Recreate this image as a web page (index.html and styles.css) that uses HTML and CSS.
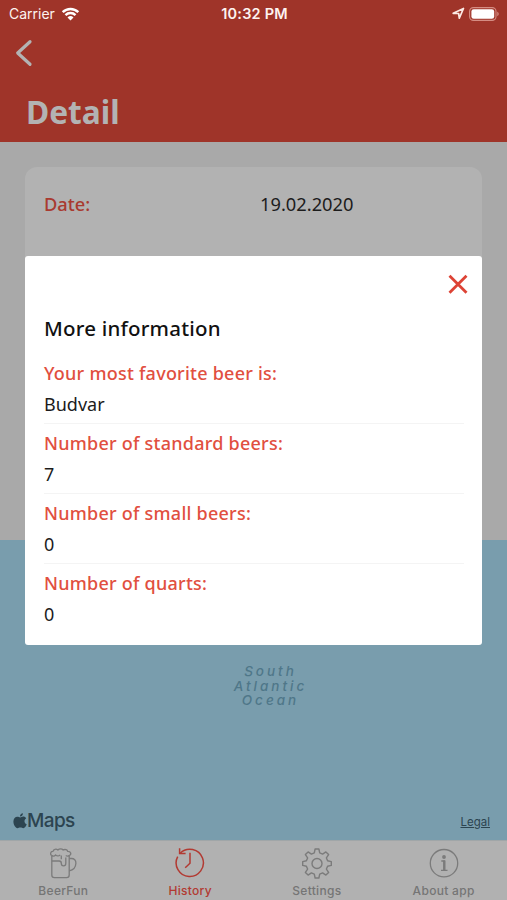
FILE: index.html
```html
<!DOCTYPE html>
<html lang="en">
<head>
  <meta charset="UTF-8">
  <meta name="viewport" content="width=device-width, initial-scale=1.0">
  <title>BeerFun - Detail</title>
  <link rel="stylesheet" href="styles.css">
</head>
<body>
  <div class="screen">
    <header class="header">
      <div class="status-bar">
        <div class="status-left">
          <span class="carrier">Carrier</span>
          <svg class="wifi" width="19" height="14" viewBox="0 0 18 14">
            <path d="M1.2 5.100a11.200 11.200 0 0 1 15.600 0M4 8.100a7.200 7.200 0 0 1 10 0" fill="none" stroke="#fff" stroke-width="2.500"/>
            <path d="M9 13.600L6 10.400a4.400 4.400 0 0 1 6 0z" fill="#fff"/>
          </svg>
        </div>
        <span class="time">10:32 PM</span>
        <div class="status-right">
          <svg width="13" height="13" viewBox="0 0 13 13">
            <path d="M1.200 6.300L11.500 1.500 7.300 11.200 6.600 6.500z" fill="none" stroke="#fbe9e4" stroke-width="1.700" stroke-linejoin="round"/>
          </svg>
          <svg width="31" height="14" viewBox="0 0 31 14">
            <rect x=".6" y=".6" width="26.400" height="12.800" rx="3.800" fill="none" stroke="#d58d83" stroke-width="1.100"/>
            <rect x="2.400" y="2.300" width="22.800" height="9.400" rx="2.300" fill="#fff"/>
            <path d="M28.300 4.800v4.400c1.900-.7 1.900-3.700 0-4.400z" fill="#d58d83"/>
          </svg>
        </div>
      </div>
      <svg class="back" width="18" height="28" viewBox="0 0 18 28">
        <path d="M15 2.700L2.700 14 15 25.300" fill="none" stroke="#b3b3b3" stroke-width="3.200" stroke-linecap="round" stroke-linejoin="round"/>
      </svg>
      <h1 class="title">Detail</h1>
    </header>

    <main class="content">
      <div class="card">
        <span class="card-label">Date:</span>
        <span class="card-value">19.02.2020</span>
      </div>
    </main>

    <section class="map">
      <p class="ocean">South<br>Atlantic<br>Ocean</p>
      <div class="map-footer">
        <div class="maps-logo">
          <svg width="14" height="16" viewBox="0 0 14 16" fill="#2c4450">
            <path d="M7.100 4.400C8 4.400 8.900 3.600 10.200 3.600c1.200 0 2.300.6 3 1.600-2.500 1.500-2.100 5 .5 6.100-.7 2-2 3.900-3.400 3.900-1.100 0-1.500-.7-2.900-.7s-1.800.7-2.900.7C2.500 15.200.4 11.800.4 8.600c0-3.100 1.900-4.900 3.900-4.900 1.200 0 2.100.7 2.800.7z"/>
            <path d="M9.900.2c.2 1.700-1.200 3.300-2.900 3.200C6.900 1.800 8.300.3 9.900.2z"/>
          </svg>
          <span class="maps-text">Maps</span>
        </div>
        <span class="legal">Legal</span>
      </div>
    </section>

    <nav class="tabs">
      <div class="tab">
        <svg width="30" height="32" viewBox="0 0 30 32" fill="none" stroke="#7b7b7b" stroke-width="1.300" stroke-linejoin="round">
          <path d="M3.800 8.600V28c0 1.600 1 2.600 2.600 2.600h12.200c1.600 0 2.600-1 2.600-2.600V8.600"/>
          <path d="M3.800 8.600C1.900 7.800 2.200 4.300 5 4.300c.6-2.200 3.200-2.800 4.900-1.300 1.400-1.600 4-1.600 5.300 0 1.800-1.100 4.200-.3 4.500 1.300 3.200-.1 4.200 3.200 1.500 4.300"/>
          <path d="M3.800 8.600c1.700 1 3.200.2 3.800-.7 1.300 1.400 3.300 1.400 4.600 0M17.800 8.400c1 .8 2.300.8 3.400.2"/>
          <path d="M3.800 14h7.400c1.700 0 2.100.7 2.100 2.200 0 3.500 4.500 3.500 4.500 0V10.500M13.300 8.500v3.800"/>
          <path d="M21.200 11.500h2.300c2.700 0 4.500 1.800 4.400 4.800-.2 4-2.800 6.900-6.700 7.500"/>
        </svg>
        <span class="tab-name">BeerFun</span>
      </div>
      <div class="tab active">
        <svg width="30" height="32" viewBox="0 0 30 32" fill="none" stroke="#b23a32" stroke-width="1.500">
          <path d="M5.200 6.200A13.600 13.600 0 1 1 2.700 9.600"/>
          <path d="M4.600 1.200v5.400h6M15 5.800v10.400l-4.800 4.600"/>
        </svg>
        <span class="tab-name">History</span>
      </div>
      <div class="tab">
        <svg width="30" height="32" viewBox="0 0 30 32" fill="none" stroke="#7b7b7b" stroke-width="1.400" stroke-linejoin="round">
          <path d="M13.100 2h3.800l.8 3.900 2.900 1.200 3.300-2.200 2.700 2.700-2.200 3.300 1.200 2.900 3.700.8v3.800l-3.700.8-1.200 2.900 2.200 3.300-2.700 2.700-3.300-2.200-2.900 1.200-.8 3.900h-3.800l-.8-3.900-2.900-1.200-3.300 2.200-2.700-2.700 2.200-3.300-1.200-2.900-3.700-.8v-3.800l3.700-.8 1.200-2.900-2.200-3.300 2.700-2.700 3.300 2.200 2.900-1.200z"/>
          <circle cx="15" cy="16.500" r="5"/>
        </svg>
        <span class="tab-name">Settings</span>
      </div>
      <div class="tab">
        <svg width="30" height="32" viewBox="0 0 30 32" fill="none" stroke="#7b7b7b">
          <circle cx="15" cy="16.200" r="13.700" stroke-width="1.300"/>
          <circle cx="15" cy="10" r="1.900" fill="#7b7b7b" stroke="none"/>
          <path d="M12.300 14h3v9M12 23.300h6.500" stroke-width="1.300"/>
          <path d="M15.300 13.500v10" stroke-width="2.400"/>
        </svg>
        <span class="tab-name">About app</span>
      </div>
    </nav>

    <!-- More information dialog -->
    <div class="modal">
      <div class="modal-top">
        <svg class="close" width="20" height="20" viewBox="0 0 20 20">
          <path d="M1.500 1.800l17 17M18.500 1.800L1.500 18.800" stroke="#dd4335" stroke-width="2.800"/>
        </svg>
      </div>
      <h2 class="modal-title">More information</h2>
      <div class="row">
        <div class="label">Your most favorite beer is:</div>
        <div class="value">Budvar</div>
      </div>
      <div class="row">
        <div class="label">Number of standard beers:</div>
        <div class="value">7</div>
      </div>
      <div class="row">
        <div class="label">Number of small beers:</div>
        <div class="value">0</div>
      </div>
      <div class="row">
        <div class="label">Number of quarts:</div>
        <div class="value">0</div>
      </div>
    </div>
  </div>
</body>
</html>
```

FILE: styles.css
```css
* {
  box-sizing: border-box;
}
body {
  margin: 0;
  font-family: "Noto Sans", sans-serif;
}
.screen {
  position: relative;
  display: flex;
  flex-direction: column;
  width: 507px;
  height: 900px;
  overflow: hidden;
  background-color: #a9a9a9;
}
.header {
  display: flex;
  flex-direction: column;
  height: 142px;
  background-color: #9f3429;
}
.status-bar {
  display: flex;
  align-items: center;
  height: 27px;
  padding: 0 7px 0 9px;
  font-family: Inter, sans-serif;
  font-size: 14px;
  color: #fdf3f0;
}
.status-left, .status-right {
  display: flex;
  flex: 1;
  align-items: center;
  gap: 6px;
}
.status-right {
  justify-content: flex-end;
  gap: 4px;
}
.time {
  font-size: 14.5px;
  font-weight: 600;
  letter-spacing: 0.2px;
}
.back {
  margin: 12px 0 0 15px;
}
.title {
  margin: 22px 0 0 26px;
  font-size: 31.7px;
  line-height: 45px;
  font-weight: 700;
  color: #b3b3b3;
}
.content {
  height: 398px;
  padding: 25px 25px 0;
}
.card {
  display: flex;
  height: 373px;
  padding: 22px 18px 22px 19px;
  border-radius: 12px 12px 0 0;
  background-color: #b2b2b2;
  font-size: 18.3px;
  line-height: 30px;
}
.card-label {
  width: 216px;
  font-weight: 500;
  color: #a93a30;
}
.card-value {
  color: #1c1c1c;
}
.map {
  display: flex;
  flex-direction: column;
  justify-content: space-between;
  height: 300px;
  padding: 124px 17px 8px 13px;
  background-color: #799dad;
}
.ocean {
  margin: 0 0 0 38px;
  font-family: Inter, sans-serif;
  font-size: 13.5px;
  line-height: 14.7px;
  font-style: italic;
  font-weight: 500;
  letter-spacing: 3px;
  text-align: center;
  color: #4f7789;
}
.map-footer {
  display: flex;
  justify-content: space-between;
  align-items: center;
  font-family: Inter, sans-serif;
  color: #2c4450;
}
.maps-logo {
  display: flex;
  align-items: center;
}
.maps-text {
  font-size: 19px;
  line-height: 22px;
  font-weight: 500;
  letter-spacing: -0.6px;
}
.legal {
  margin-top: 2px;
  font-size: 11.5px;
  text-decoration: underline;
}
.tabs {
  display: flex;
  height: 60px;
  padding-top: 6px;
  border-top: 1px solid #a0a6a8;
  background-color: #b1b1b1;
}
.tab {
  display: flex;
  flex: 1;
  flex-direction: column;
  align-items: center;
  font-family: Inter, sans-serif;
  font-size: 12px;
  line-height: 19px;
  font-weight: 500;
  letter-spacing: 0.3px;
  color: #757575;
}
.tab svg {
  flex-shrink: 0;
}
.tab-name {
  margin-top: 2px;
}
.tab.active {
  color: #b23a32;
}
.modal {
  position: absolute;
  top: 256px;
  left: 25px;
  width: 457px;
  height: 389px;
  padding: 0 18px 0 19px;
  border-radius: 3px;
  background-color: #fff;
}
.modal-top {
  display: flex;
  justify-content: flex-end;
  height: 56px;
  padding-top: 18px;
  margin-right: -4px;
}
.modal-title {
  margin: 0;
  height: 42px;
  font-size: 20.5px;
  line-height: 33px;
  font-weight: 500;
  letter-spacing: 0.2px;
  color: #111;
}
.row {
  height: 70px;
  padding: 4px 0 3px;
  border-bottom: 1px solid #f4f4f4;
  font-size: 18px;
  line-height: 31px;
}
.row:last-child {
  border-bottom: none;
}
.label {
  font-weight: 500;
  letter-spacing: 0.24px;
  color: #e14f40;
}
.value {
  color: #1c1c1c;
}
```
